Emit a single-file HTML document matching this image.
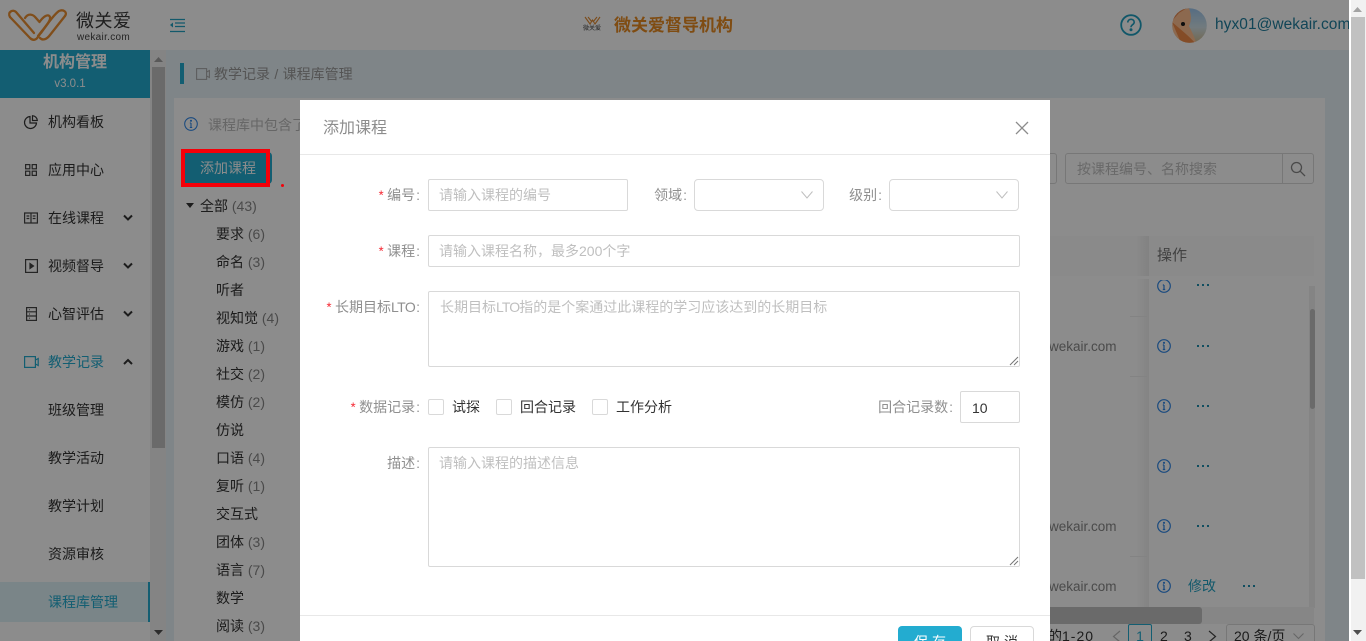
<!DOCTYPE html>
<html><head><meta charset="utf-8"><title>添加课程</title>
<style>
*{box-sizing:border-box}
html,body{margin:0;padding:0;width:1366px;height:641px;overflow:hidden;background:#fff}
body{position:relative;font-family:"Liberation Sans","Noto Sans CJK SC",sans-serif;font-size:14px;color:#333}
.a{position:absolute;white-space:nowrap}
.t{position:absolute;white-space:nowrap;line-height:20px;height:20px;transform:translateY(1px)}
.m{left:48px;color:#333}
.n{color:#888}
.tree{left:216px;color:#333}
.line{position:absolute;border-top:1px solid #e8e8e8}
.ib{position:absolute;border:1px solid #d9d9d9;border-radius:2px;background:#fff}
.ph{color:#bfbfbf;margin-left:-1px}
.lb{position:absolute;white-space:nowrap;line-height:20px;color:#8f8f8f;text-align:right;transform:translateY(1px)}
.lb i{color:#f5222d;font-style:normal;font-family:"Liberation Mono",monospace;font-size:13px;margin-right:2px}
.lb b{font-weight:400;margin-left:1px;margin-right:1px}
svg{position:absolute;overflow:visible}
</style></head><body>

<!-- underlying page -->
<div class="a" style="left:0;top:0;width:1350px;height:641px;background:#e8f3f7"></div>
<div class="a" style="left:0;top:0;width:1350px;height:50px;background:#fff"></div>

<!-- logo -->
<svg style="left:0;top:0" width="150" height="50" viewBox="0 0 150 50" fill="none" stroke="#ea8f32" stroke-width="2.300" stroke-linejoin="round" stroke-linecap="round">
<path d="M10 17C7 12 13 9 16 12L34 33"/>
<path d="M10 17L30 38C33 41 36 40 38 37L42 31"/>
<path d="M25 18C28 13 33 14 36 18L39.500 22C43 17 48 13 50 17C51 21 45 27 38 36"/>
<path d="M65 16C68 12 63 9 59 11C56 13 50 20 41 33"/>
<path d="M65 16L50 35C47 39 43 41 40 38"/>
</svg>
<div class="t" style="left:76px;top:8px;font-size:18px;line-height:24px;height:24px;color:#3a3a3a;letter-spacing:.5px">微关爱</div>
<div class="t" style="left:77px;top:27px;font-size:10px;color:#444;letter-spacing:.3px">wekair.com</div>

<!-- menu toggle -->
<svg style="left:169px;top:18px" width="16" height="15" viewBox="0 0 16 15" fill="none" stroke="#23a3c4" stroke-width="1.300"><path d="M1 1.500h15M6 5h10M6 8.500h10M1 13.500h15"/><path d="M4 4.500L1 7l3 2.500z" fill="#23a3c4" stroke="none"/></svg>

<!-- center logo -->
<svg style="left:584px;top:16px" width="17" height="10" viewBox="0 0 17 10" fill="none" stroke="#e08a32" stroke-width="1.100"><path d="M1 1l5 7 2.500-4 2.500 4 5-7M4 1l4 5M13 1l-4 5"/></svg>
<div class="t" style="left:583px;top:24px;font-size:6px;line-height:9px;height:9px;color:#444">微关爱</div>
<div class="t" style="left:614px;top:15px;font-size:17px;font-weight:700;color:#e88a22">微关爱督导机构</div>

<!-- help -->
<svg style="left:1120px;top:14px" width="22" height="22" viewBox="0 0 22 22" fill="none" stroke="#1f9fc0" stroke-width="1.800"><circle cx="11" cy="11" r="9.800"/><path d="M7.800 8.500c0-4.200 6.400-4.200 6.400-.3 0 2.400-3.200 2.500-3.200 5" stroke-width="1.600"/><circle cx="11" cy="15.800" r=".6" fill="#1f9fc0"/></svg>

<!-- avatar -->
<svg style="left:1172px;top:8px" width="35" height="35" viewBox="0 0 35 35">
<defs><clipPath id="av"><circle cx="17.500" cy="17.500" r="17.300"/></clipPath>
<linearGradient id="sky" x1="0" y1="0" x2="0" y2="1"><stop offset="0" stop-color="#9cc6ee"/><stop offset=".55" stop-color="#cfe0e6"/><stop offset="1" stop-color="#d0bc90"/></linearGradient></defs>
<g clip-path="url(#av)"><rect width="35" height="35" fill="url(#sky)"/>
<path d="M0 0h17c2 6 3 12 0 18 3 6 6 12 7 17H0z" fill="#ffc090"/>
<path d="M0 14l9 21h14C17 28 8 21 0 14z" fill="#f08a48"/>
<path d="M0 0h15L7 5 0 13z" fill="#e8874f"/>
<circle cx="11" cy="16" r="2" fill="#1a1a1a"/></g></svg>
<div class="t" style="left:1215px;top:14px;font-size:15.500px;color:#1f7f9e;width:135px;overflow:hidden;letter-spacing:.05px">hyx01@wekair.com</div>

<!-- sidebar -->
<div class="a" style="left:0;top:50px;width:150px;height:591px;background:#fff"></div>
<div class="a" style="left:0;top:50px;width:150px;height:48px;background:#23acd0"></div>
<div class="t" style="left:0;top:52px;width:150px;text-align:center;font-size:16px;font-weight:700;color:#fff">机构管理</div>
<div class="t" style="left:0;top:73px;width:140px;text-align:center;font-size:11.500px;color:#fff">v3.0.1</div>

<div class="a" style="left:0;top:582px;width:150px;height:40px;background:#dff2f7"></div>
<div class="a" style="left:148px;top:582px;width:2px;height:40px;background:#23acd0"></div>

<svg style="left:24px;top:115px" width="14" height="14" viewBox="0 0 14 14" fill="none" stroke="#333" stroke-width="1.200"><path d="M6 1.500a6 6 0 1 0 6.500 6.500H6z"/><path d="M8.500 .7A5 5 0 0 1 13.300 5.500H8.500z"/></svg>
<svg style="left:25px;top:164px" width="12" height="12" viewBox="0 0 12 12" fill="none" stroke="#444" stroke-width="1.200"><rect x=".6" y=".6" width="4.200" height="4.200"/><rect x="7.200" y=".6" width="4.200" height="4.200"/><rect x=".6" y="7.200" width="4.200" height="4.200"/><rect x="7.200" y="7.200" width="4.200" height="4.200"/></svg>
<svg style="left:24px;top:212px" width="14" height="12" viewBox="0 0 14 12" fill="none" stroke="#444" stroke-width="1.200"><path d="M.6 1h12.800v10H.6zM7 1v10M2.500 4h2.800M2.500 6.500h2.800M8.700 4h2.800M8.700 6.500h2.800"/></svg>
<svg style="left:25px;top:259px" width="13" height="14" viewBox="0 0 13 14" fill="none" stroke="#444" stroke-width="1.200"><rect x=".6" y=".6" width="11.800" height="12.800"/><path d="M5 4.500l3.500 2.500L5 9.500z" fill="#444"/></svg>
<svg style="left:26px;top:307px" width="11" height="14" viewBox="0 0 11 14" fill="none" stroke="#444" stroke-width="1.200"><rect x=".6" y=".6" width="9.800" height="12.800"/><path d="M.6 4.800h9.800M.6 9h9.800M3 2.700h.8M3 7h.8M3 11.200h.8"/></svg>
<svg style="left:24px;top:356px" width="15" height="12" viewBox="0 0 15 12" fill="none" stroke="#23acd0" stroke-width="1.200"><rect x=".6" y=".6" width="10.800" height="10.800"/><path d="M11.500 4l2.700-1.500v7L11.500 8"/></svg>

<div class="t m" style="top:111px">机构看板</div>
<div class="t m" style="top:159px">应用中心</div>
<div class="t m" style="top:207px">在线课程</div>
<div class="t m" style="top:255px">视频督导</div>
<div class="t m" style="top:303px">心智评估</div>
<div class="t m" style="top:351px;color:#23acd0">教学记录</div>
<div class="t m" style="top:399px">班级管理</div>
<div class="t m" style="top:447px">教学活动</div>
<div class="t m" style="top:495px">教学计划</div>
<div class="t m" style="top:543px">资源审核</div>
<div class="t m" style="top:591px;color:#23acd0">课程库管理</div>

<svg style="left:123px;top:214px" width="10" height="8" fill="none" stroke="#333" stroke-width="2"><path d="M1 1.500l4 4 4-4"/></svg>
<svg style="left:123px;top:262px" width="10" height="8" fill="none" stroke="#333" stroke-width="2"><path d="M1 1.500l4 4 4-4"/></svg>
<svg style="left:123px;top:310px" width="10" height="8" fill="none" stroke="#333" stroke-width="2"><path d="M1 1.500l4 4 4-4"/></svg>
<svg style="left:123px;top:358px" width="10" height="8" fill="none" stroke="#333" stroke-width="2"><path d="M1 6l4-4 4 4"/></svg>

<!-- sidebar scrollbar -->
<div class="a" style="left:150px;top:50px;width:16px;height:591px;background:#f1f1f1"></div>
<div class="a" style="left:152px;top:67px;width:13px;height:381px;background:#c1c1c1"></div>
<svg style="left:154px;top:57px" width="9" height="5"><path d="M0 5L4.500 0 9 5z" fill="#a3a3a3"/></svg>
<svg style="left:154px;top:630px" width="9" height="5"><path d="M0 0L4.500 5 9 0z" fill="#505050"/></svg>

<!-- breadcrumb -->
<div class="a" style="left:180px;top:63px;width:4px;height:21px;background:#23acd0"></div>
<svg style="left:196px;top:68px" width="14" height="12" viewBox="0 0 14 12" fill="none" stroke="#aaa" stroke-width="1.100"><rect x=".6" y=".6" width="10" height="10.800"/><path d="M10.600 4l2.800-1.500v7L10.600 8"/></svg>
<div class="t" style="left:214px;top:63px;color:#999;word-spacing:.5px">教学记录 / 课程库管理</div>

<!-- card -->
<div class="a" style="left:174px;top:98px;width:1151px;height:543px;background:#fff"></div>
<svg style="left:184px;top:117px" width="14" height="14" viewBox="0 0 14 14" fill="none" stroke="#3088e8" stroke-width="1.100"><circle cx="7" cy="7" r="6.300"/><path d="M7 6v4.500M5.800 10.500h2.400M5.800 6H7" /><circle cx="7" cy="3.800" r=".5" fill="#3088e8"/></svg>
<div class="t" style="left:208px;top:114px;color:#bbb">课程库中包含了</div>

<div class="a" style="left:184px;top:152px;width:88px;height:32px;border-radius:4px;background:#23acd0"></div>
<div class="t" style="left:200px;top:157px;color:#fff">添加课程</div>

<!-- search -->
<div class="a" style="left:1040px;top:153px;width:17px;height:31px;border:1px solid #d9d9d9;border-radius:0 3px 3px 0;background:#fff"></div>
<div class="a" style="left:1065px;top:153px;width:249px;height:31px;border:1px solid #d9d9d9;border-radius:3px;background:#fff"></div>
<div class="a" style="left:1282px;top:153px;width:1px;height:31px;background:#d9d9d9"></div>
<div class="t" style="left:1077px;top:158px;color:#bfbfbf">按课程编号、名称搜索</div>
<svg style="left:1290px;top:161px" width="16" height="16" viewBox="0 0 16 16" fill="none" stroke="#888" stroke-width="1.300"><circle cx="6.500" cy="6.500" r="5"/><path d="M10.200 10.200l4.800 4.800"/></svg>

<!-- tree -->
<svg style="left:186px;top:203px" width="9" height="6"><path d="M0 0h8L4 5z" fill="#333"/></svg>
<div class="t" style="left:200px;top:195px;color:#333">全部 <span class="n">(43)</span></div>
<div class="t tree" style="top:223px">要求 <span class="n">(6)</span></div>
<div class="t tree" style="top:251px">命名 <span class="n">(3)</span></div>
<div class="t tree" style="top:279px">听者</div>
<div class="t tree" style="top:307px">视知觉 <span class="n">(4)</span></div>
<div class="t tree" style="top:335px">游戏 <span class="n">(1)</span></div>
<div class="t tree" style="top:363px">社交 <span class="n">(2)</span></div>
<div class="t tree" style="top:391px">模仿 <span class="n">(2)</span></div>
<div class="t tree" style="top:419px">仿说</div>
<div class="t tree" style="top:447px">口语 <span class="n">(4)</span></div>
<div class="t tree" style="top:475px">复听 <span class="n">(1)</span></div>
<div class="t tree" style="top:503px">交互式</div>
<div class="t tree" style="top:531px">团体 <span class="n">(3)</span></div>
<div class="t tree" style="top:559px">语言 <span class="n">(7)</span></div>
<div class="t tree" style="top:587px">数学</div>
<div class="t tree" style="top:615px">阅读 <span class="n">(3)</span></div>

<!-- table -->
<div class="a" style="left:1050px;top:236px;width:264px;height:40px;background:#fbfbfb"></div>
<div class="a" style="left:1136px;top:236px;width:13px;height:372px;background:linear-gradient(90deg,rgba(0,0,0,0),rgba(0,0,0,.06))"></div>
<div class="a" style="left:1050px;top:276px;width:264px;height:3px;background:#fff"></div>
<div class="t" style="left:1157px;top:245px;font-size:15px;color:#777">操作</div>
<div class="a" style="left:1130px;top:316px;width:17px;border-top:1px solid #efefef"></div>
<div class="a" style="left:1130px;top:376px;width:17px;border-top:1px solid #efefef"></div>
<div class="a" style="left:1130px;top:556px;width:17px;border-top:1px solid #efefef"></div>
<div class="t" style="left:1049px;top:336px;font-size:13.500px;color:#888">wekair.com</div>
<div class="t" style="left:1049px;top:516px;font-size:13.500px;color:#888">wekair.com</div>
<div class="t" style="left:1049px;top:576px;font-size:13.500px;color:#888">wekair.com</div>

<!-- info icons -->
<svg style="left:1157px;top:279px" width="14" height="14" viewBox="0 0 14 14" fill="none" stroke="#3088e8" stroke-width="1.200"><circle cx="7" cy="7" r="6.300"/><path d="M7 6v4.500M5.800 10.500h2.400M5.800 6H7"/></svg>
<div class="a" style="left:1150px;top:276px;width:150px;height:4px;background:#fff"></div>
<svg style="left:1157px;top:339px" width="14" height="14" viewBox="0 0 14 14" fill="none" stroke="#3088e8" stroke-width="1.200"><circle cx="7" cy="7" r="6.300"/><path d="M7 6v4.500M5.800 10.500h2.400M5.800 6H7"/><circle cx="7" cy="3.800" r=".5" fill="#3088e8"/></svg>
<svg style="left:1157px;top:399px" width="14" height="14" viewBox="0 0 14 14" fill="none" stroke="#3088e8" stroke-width="1.200"><circle cx="7" cy="7" r="6.300"/><path d="M7 6v4.500M5.800 10.500h2.400M5.800 6H7"/><circle cx="7" cy="3.800" r=".5" fill="#3088e8"/></svg>
<svg style="left:1157px;top:459px" width="14" height="14" viewBox="0 0 14 14" fill="none" stroke="#3088e8" stroke-width="1.200"><circle cx="7" cy="7" r="6.300"/><path d="M7 6v4.500M5.800 10.500h2.400M5.800 6H7"/><circle cx="7" cy="3.800" r=".5" fill="#3088e8"/></svg>
<svg style="left:1157px;top:519px" width="14" height="14" viewBox="0 0 14 14" fill="none" stroke="#3088e8" stroke-width="1.200"><circle cx="7" cy="7" r="6.300"/><path d="M7 6v4.500M5.800 10.500h2.400M5.800 6H7"/><circle cx="7" cy="3.800" r=".5" fill="#3088e8"/></svg>
<svg style="left:1157px;top:579px" width="14" height="14" viewBox="0 0 14 14" fill="none" stroke="#3088e8" stroke-width="1.200"><circle cx="7" cy="7" r="6.300"/><path d="M7 6v4.500M5.800 10.500h2.400M5.800 6H7"/><circle cx="7" cy="3.800" r=".5" fill="#3088e8"/></svg>
<!-- dots -->
<svg style="left:1197px;top:284px" width="14" height="3" fill="#1f8fb0"><rect width="2" height="2"/><rect x="5" width="2" height="2"/><rect x="10" width="2" height="2"/></svg>
<svg style="left:1197px;top:345px" width="14" height="3" fill="#1f8fb0"><rect width="2" height="2"/><rect x="5" width="2" height="2"/><rect x="10" width="2" height="2"/></svg>
<svg style="left:1197px;top:405px" width="14" height="3" fill="#1f8fb0"><rect width="2" height="2"/><rect x="5" width="2" height="2"/><rect x="10" width="2" height="2"/></svg>
<svg style="left:1197px;top:465px" width="14" height="3" fill="#1f8fb0"><rect width="2" height="2"/><rect x="5" width="2" height="2"/><rect x="10" width="2" height="2"/></svg>
<svg style="left:1197px;top:525px" width="14" height="3" fill="#1f8fb0"><rect width="2" height="2"/><rect x="5" width="2" height="2"/><rect x="10" width="2" height="2"/></svg>
<svg style="left:1243px;top:585px" width="14" height="3" fill="#1f8fb0"><rect width="2" height="2"/><rect x="5" width="2" height="2"/><rect x="10" width="2" height="2"/></svg>
<div class="t" style="left:1188px;top:575px;color:#23a3c4">修改</div>

<!-- table v scrollbar -->
<div class="a" style="left:1309px;top:286px;width:6px;height:322px;background:#f1f1f1"></div>
<div class="a" style="left:1310px;top:309px;width:5px;height:100px;border-radius:3px;background:#c1c1c1"></div>

<!-- h scrollbar -->
<div class="a" style="left:1050px;top:607px;width:264px;height:17px;background:#f5f5f5"></div>
<div class="a" style="left:1050px;top:607px;width:152px;height:17px;border-radius:0 3px 3px 0;background:#c1c1c1"></div>

<!-- pagination -->
<div class="t" style="left:1048px;top:625px;color:#333">的<span style="letter-spacing:1px">1-20</span></div>
<svg style="left:1112px;top:630px" width="9" height="13" fill="none" stroke="#bbb" stroke-width="1.200"><path d="M8 1L1.500 6.500 8 12"/></svg>
<div class="a" style="left:1128px;top:624px;width:24px;height:24px;border:1px solid #23acd0;border-radius:2px;text-align:center;line-height:22px;color:#23acd0">1</div>
<div class="t" style="left:1160px;top:625px">2</div>
<div class="t" style="left:1184px;top:625px">3</div>
<svg style="left:1208px;top:630px" width="9" height="13" fill="none" stroke="#444" stroke-width="1.200"><path d="M1 1l6.500 5.500L1 12"/></svg>
<div class="a" style="left:1226px;top:624px;width:89px;height:30px;border:1px solid #d9d9d9;border-radius:3px"></div>
<div class="t" style="left:1234px;top:625px">20 条/页</div>
<svg style="left:1293px;top:633px" width="11" height="7" fill="none" stroke="#bbb" stroke-width="1.100"><path d="M.5 .5l5 5 5-5"/></svg>

<!-- mask -->
<div class="a" style="left:0;top:0;width:1350px;height:641px;background:rgba(0,0,0,.45)"></div>

<!-- annotation -->
<div class="a" style="left:181px;top:149px;width:89px;height:38px;border:4px solid #f40009"></div>
<div class="a" style="left:281px;top:184px;width:3px;height:3px;border-radius:50%;background:#f40009"></div>

<!-- page scrollbar -->
<div class="a" style="left:1350px;top:0;width:16px;height:641px;background:#f1f1f1"></div>
<div class="a" style="left:1349px;top:0;width:2px;height:641px;background:#fff"></div>
<div class="a" style="left:1351px;top:17px;width:14px;height:562px;background:#c1c1c1"></div>
<svg style="left:1353px;top:7px" width="9" height="5"><path d="M0 5L4.500 0 9 5z" fill="#a3a3a3"/></svg>
<svg style="left:1353px;top:630px" width="9" height="5"><path d="M0 0L4.500 5 9 0z" fill="#505050"/></svg>

<!-- modal -->
<div class="a" style="left:300px;top:100px;width:750px;height:541px;background:#fff"></div>
<div class="t" style="left:323px;top:117px;font-size:16px;line-height:22px;height:22px;color:#8c8c8c">添加课程</div>
<svg style="left:1015px;top:121px" width="14" height="14" fill="none" stroke="#8c8c8c" stroke-width="1.300"><path d="M1 1l12 12M13 1L1 13"/></svg>
<div class="line" style="left:300px;top:154px;width:750px"></div>

<div class="lb" style="left:300px;top:184px;width:121px"><i>*</i>编号<b>:</b></div>
<div class="ib" style="left:428px;top:179px;width:200px;height:32px"></div>
<div class="t ph" style="left:440px;top:184px">请输入课程的编号</div>

<div class="lb" style="left:600px;top:184px;width:88px">领域<b>:</b></div>
<div class="ib" style="left:694px;top:179px;width:130px;height:32px;border-radius:4px"></div>
<svg style="left:801px;top:191px" width="12" height="8" fill="none" stroke="#bfbfbf" stroke-width="1"><path d="M.5 .5l5.500 6.500 5.500-6.500"/></svg>

<div class="lb" style="left:800px;top:184px;width:83px">级别<b>:</b></div>
<div class="ib" style="left:889px;top:179px;width:130px;height:32px;border-radius:4px"></div>
<svg style="left:996px;top:191px" width="12" height="8" fill="none" stroke="#bfbfbf" stroke-width="1"><path d="M.5 .5l5.500 6.500 5.500-6.500"/></svg>

<div class="lb" style="left:300px;top:240px;width:121px"><i>*</i>课程<b>:</b></div>
<div class="ib" style="left:428px;top:235px;width:592px;height:32px"></div>
<div class="t ph" style="left:440px;top:240px">请输入课程名称，最多200个字</div>

<div class="lb" style="left:300px;top:296px;width:121px"><i>*</i>长期目标<span style="letter-spacing:-.6px">LTO</span><b>:</b></div>
<div class="ib" style="left:428px;top:291px;width:592px;height:76px"></div>
<div class="t ph" style="left:441px;top:296px">长期目标<span style="letter-spacing:-.9px">LTO</span>指的是个案通过此课程的学习应该达到的长期目标</div>
<svg style="left:1009px;top:356px" width="10" height="10" stroke="#777" stroke-width="1"><path d="M1 9l8-8M5 9l4-4"/></svg>

<div class="lb" style="left:300px;top:396px;width:121px"><i>*</i>数据记录<b>:</b></div>
<div class="ib" style="left:428px;top:399px;width:16px;height:16px"></div>
<div class="t" style="left:452px;top:396px">试探</div>
<div class="ib" style="left:496px;top:399px;width:16px;height:16px"></div>
<div class="t" style="left:520px;top:396px">回合记录</div>
<div class="ib" style="left:592px;top:399px;width:16px;height:16px"></div>
<div class="t" style="left:616px;top:396px">工作分析</div>
<div class="lb" style="left:800px;top:396px;width:154px">回合记录数<b>:</b></div>
<div class="ib" style="left:960px;top:391px;width:60px;height:32px"></div>
<div class="t" style="left:972px;top:397px;color:#333">10</div>

<div class="lb" style="left:300px;top:452px;width:121px">描述<b>:</b></div>
<div class="ib" style="left:428px;top:447px;width:592px;height:120px"></div>
<div class="t ph" style="left:440px;top:452px">请输入课程的描述信息</div>
<svg style="left:1009px;top:556px" width="10" height="10" stroke="#777" stroke-width="1"><path d="M1 9l8-8M5 9l4-4"/></svg>

<div class="line" style="left:300px;top:615px;width:750px"></div>
<div class="a" style="left:898px;top:626px;width:64px;height:32px;border-radius:4px;background:#23acd0;color:#fff;text-align:center;line-height:32px;font-size:14px;letter-spacing:4px;padding-left:4px">保存</div>
<div class="a" style="left:970px;top:626px;width:64px;height:32px;border-radius:4px;border:1px solid #d9d9d9;background:#fff;color:#333;text-align:center;line-height:30px;font-size:14px;letter-spacing:4px;padding-left:4px">取消</div>

</body></html>
